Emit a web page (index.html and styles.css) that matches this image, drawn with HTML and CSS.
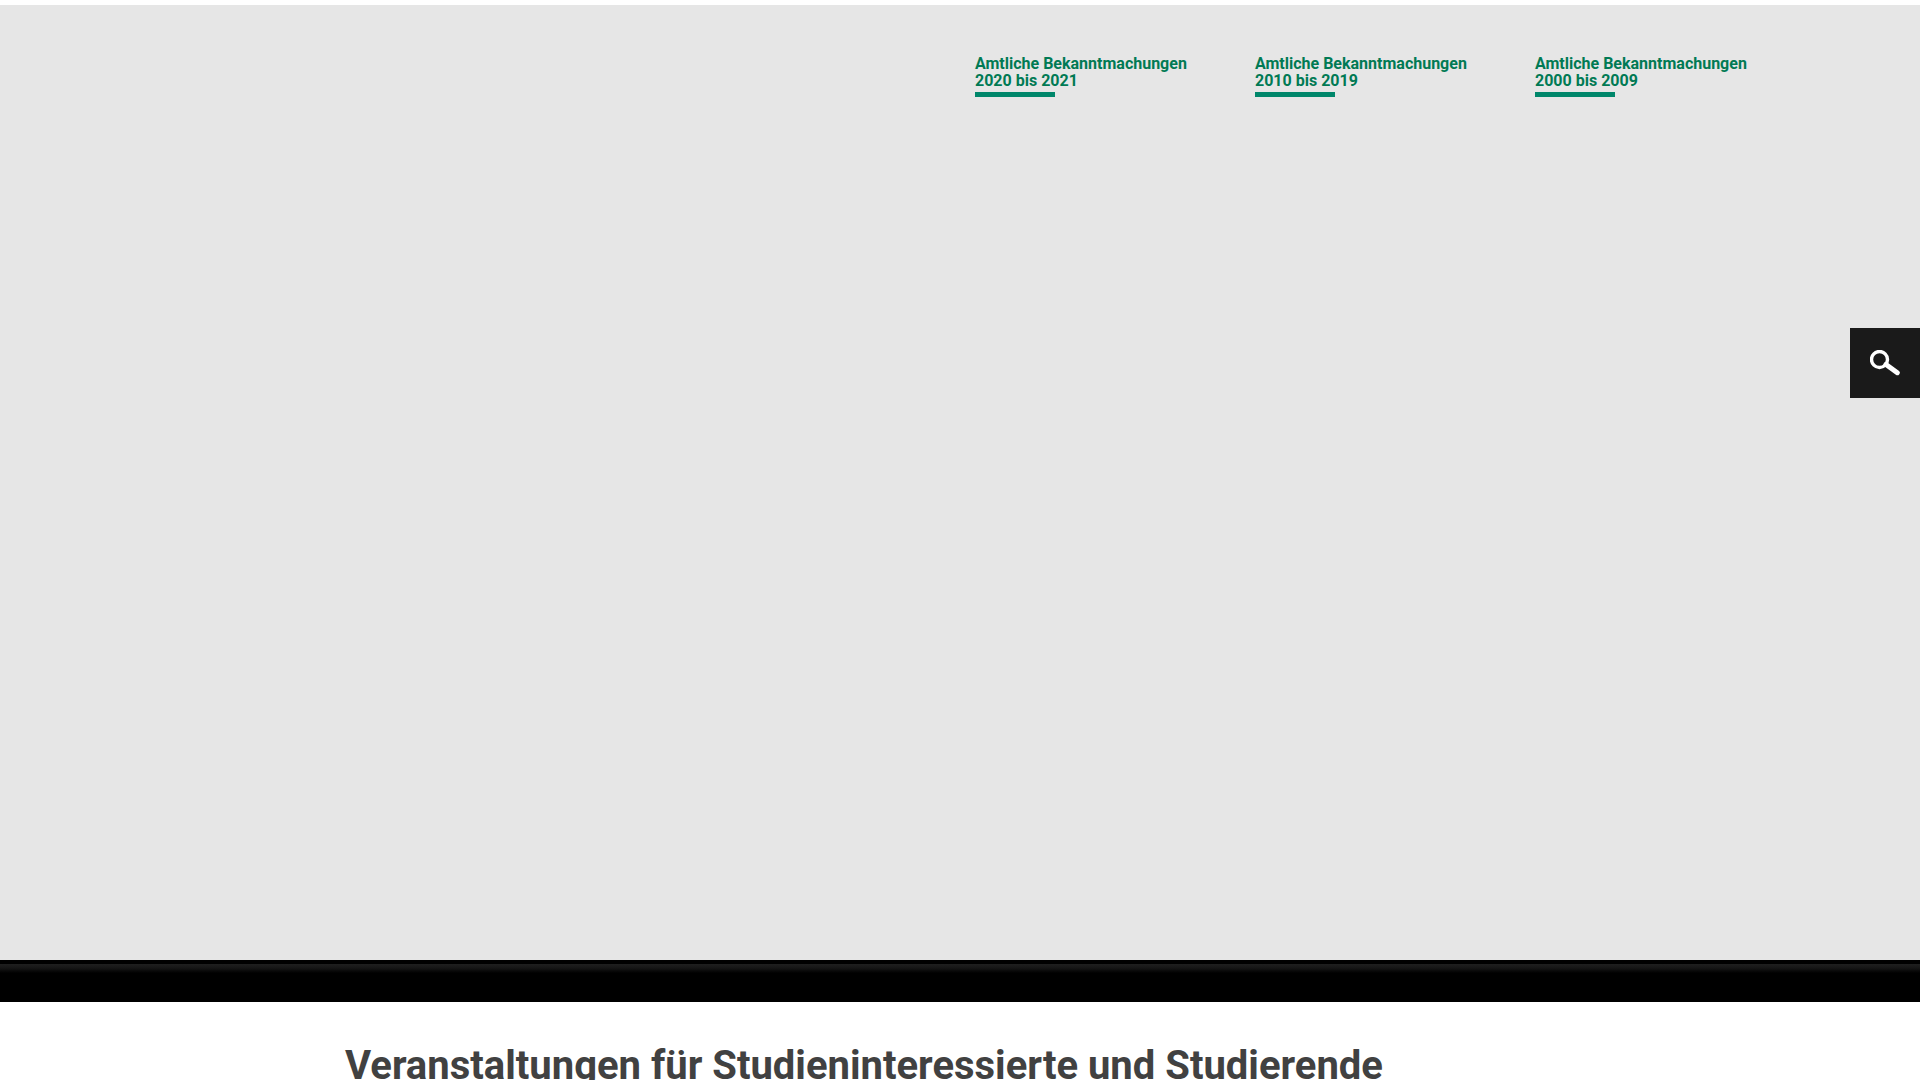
FILE: index.html
```
<!DOCTYPE html>
<html lang="de">
<head>
  <meta charset="UTF-8">
  <meta name="viewport" content="width=device-width, initial-scale=1.0">
  <title>Amtliche Bekanntmachungen</title>
  <link rel="stylesheet" href="styles.css">
</head>
<body>

  <nav class="archive">
    <a class="archive-link" href="#">Amtliche Bekanntmachungen 2020 bis 2021</a>
    <a class="archive-link" href="#">Amtliche Bekanntmachungen 2010 bis 2019</a>
    <a class="archive-link" href="#">Amtliche Bekanntmachungen 2000 bis 2009</a>
  </nav>

  <div class="divider"></div>

  <main class="content">
    <h1>Veranstaltungen für Studieninteressierte und Studierende</h1>
  </main>

  <button type="button" class="search-button" aria-label="Suche">
    <svg width="30" height="26" viewBox="0 0 30 26" fill="none" stroke="#fff">
      <circle cx="9.5" cy="9.5" r="8" stroke-width="3.4"/>
      <path d="M16 14.5 L27.3 22.7" stroke-width="5" stroke-linecap="round"/>
    </svg>
  </button>

</body>
</html>
```
FILE: styles.css
```
body {
  font-family: Roboto, sans-serif;
  margin: 0;
  padding-top: 5px;
  background-color: #fff;
  overflow-x: hidden;
}

.archive {
  display: flex;
  justify-content: flex-end;
  gap: 60px;
  box-sizing: border-box;
  min-height: 955px;
  padding: 50px 165px 0 345px;
  background-color: #e6e6e6;
}

.archive-link {
  width: 220px;
  color: #007a54;
  font-size: 16px;
  line-height: 17px;
  font-weight: bold;
  text-decoration: none;
}

/* short bar under each link */
.archive-link::after {
  content: "";
  display: block;
  width: 80px;
  height: 5px;
  margin-top: 3px;
  background-color: #00866a;
}

.divider {
  height: 42px;
  background: linear-gradient(#000 4px, #1f1f1f 4px, #161616 8px, #000 13px);
}

.content {
  padding: 40px 345px;
}

h1 {
  margin: 0;
  color: #414141;
  font-size: 40px;
  line-height: 48px;
  font-weight: bold;
}

.search-button {
  position: fixed;
  top: 328px;
  right: 0;
  display: flex;
  justify-content: center;
  align-items: center;
  width: 70px;
  height: 70px;
  padding: 0;
  border: none;
  background-color: #1a1a1a;
  cursor: pointer;
}
```
